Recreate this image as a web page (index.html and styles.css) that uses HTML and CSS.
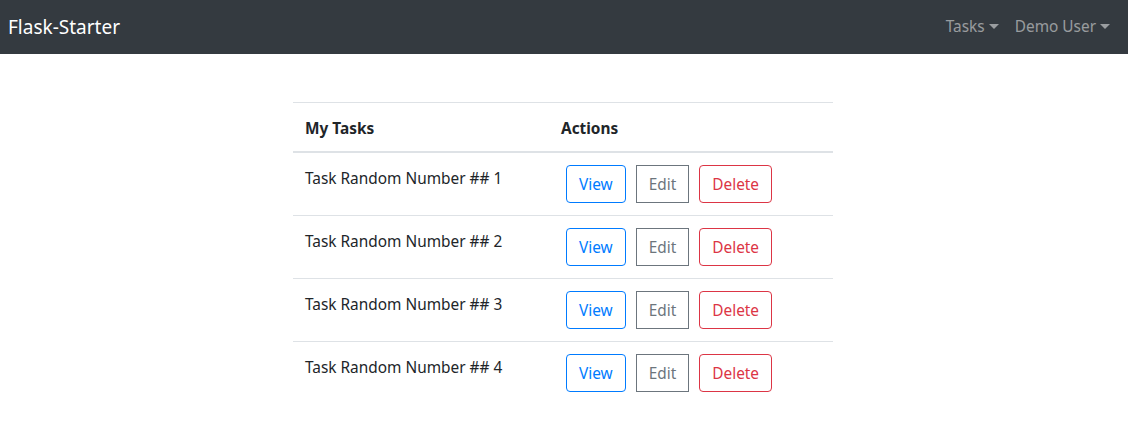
FILE: index.html
```
<!DOCTYPE html>
<html lang="en">
<head>
<meta charset="utf-8">
<title>Flask-Starter</title>
<link rel="stylesheet" href="styles.css">
</head>
<body>
<nav class="navbar">
  <a class="brand" href="#">Flask-Starter</a>
  <ul class="nav">
    <li><a class="nav-link" href="#">Tasks<span class="caret"></span></a></li>
    <li><a class="nav-link" href="#">Demo User<span class="caret"></span></a></li>
  </ul>
</nav>
<main class="container">
  <table class="table">
    <thead>
      <tr><th class="col-name">My Tasks</th><th>Actions</th></tr>
    </thead>
    <tbody>
      <tr><td class="name">Task Random Number ## 1</td><td class="actions"><a class="btn btn-view" href="#">View</a><a class="btn btn-edit" href="#">Edit</a><a class="btn btn-delete" href="#">Delete</a></td></tr>
      <tr><td class="name">Task Random Number ## 2</td><td class="actions"><a class="btn btn-view" href="#">View</a><a class="btn btn-edit" href="#">Edit</a><a class="btn btn-delete" href="#">Delete</a></td></tr>
      <tr><td class="name">Task Random Number ## 3</td><td class="actions"><a class="btn btn-view" href="#">View</a><a class="btn btn-edit" href="#">Edit</a><a class="btn btn-delete" href="#">Delete</a></td></tr>
      <tr><td class="name">Task Random Number ## 4</td><td class="actions"><a class="btn btn-view" href="#">View</a><a class="btn btn-edit" href="#">Edit</a><a class="btn btn-delete" href="#">Delete</a></td></tr>
    </tbody>
  </table>
</main>
</body>
</html>
```
FILE: styles.css
```
* { box-sizing: border-box; }
html, body { margin: 0; padding: 0; }
body {
  font-family: "Noto Sans", "Open Sans", sans-serif;
  font-size: 15.4px;
  line-height: 24px;
  color: #212529;
  background: #fff;
}
.navbar {
  height: 54px;
  background: #343a40;
  display: flex;
  align-items: center;
  justify-content: space-between;
  padding: 0 10px 0 8px;
}
.brand {
  color: #fff;
  font-size: 19px;
  text-decoration: none;
  line-height: 30px;
}
.nav {
  list-style: none;
  margin: 0;
  padding: 0;
  display: flex;
}
.nav-link {
  display: flex;
  align-items: center;
  padding: 8px;
  color: rgba(255,255,255,.5);
  text-decoration: none;
}
.caret {
  display: inline-block;
  margin-left: 4px;
  width: 0;
  height: 0;
  border-top: 5px solid currentColor;
  border-left: 5px solid transparent;
  border-right: 5px solid transparent;
  margin-top: -2px;
}
.container {
  padding-top: 48px;
  padding-right: 2px;
  display: flex;
  justify-content: center;
}
.table {
  width: 540px;
  border-collapse: collapse;
}
.table th, .table td {
  padding: 12px;
  text-align: left;
  vertical-align: top;
  border-top: 1px solid #dee2e6;
}
.table th { font-weight: 700; padding: 14px 12px 10px; }
.table td.name { padding: 14px 12px 10px; }
.table thead th { border-bottom: 2px solid #dee2e6; }
.col-name { width: 256px; }
.btn {
  display: inline-block;
  padding: 7px 12px 5px;
  margin: 0 5px;
  border: 1px solid;
  border-radius: 4px;
  text-decoration: none;
  line-height: 24px;
}
.btn-view { color: #007bff; border-color: #007bff; }
.btn-edit { color: #6c757d; border-color: #6c757d; border-radius: 0; }
.btn-delete { color: #dc3545; border-color: #dc3545; }
```
